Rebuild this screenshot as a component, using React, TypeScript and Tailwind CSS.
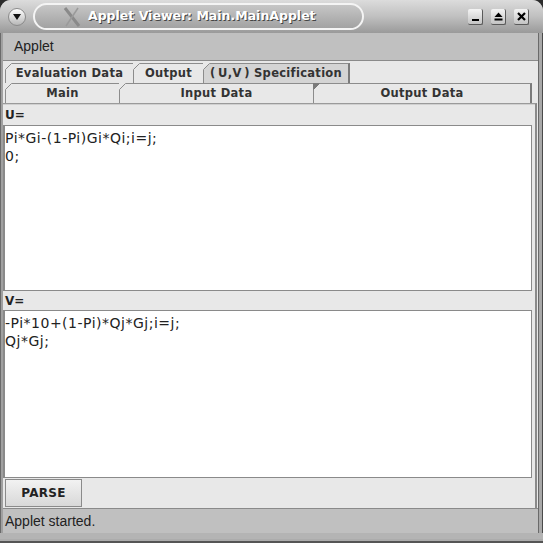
import React from "react";

const ui = { fontFamily: '"DejaVu Sans", "Liberation Sans", sans-serif' };
const plain = { fontFamily: '"Liberation Sans", Arial, sans-serif' };

function Corner({ fill, line }: { fill: string; line: string }) {
  // notched top-left corner of a tab
  return (
    <svg className="absolute -left-px -top-px" width="7" height="7" viewBox="0 0 7 7">
      <polygon points="0,0 7,0 0,7" fill={fill} />
      <line x1="0.5" y1="6.5" x2="6.5" y2="0.5" stroke={line} strokeWidth="1" />
    </svg>
  );
}

function Tab({
  label,
  width,
  bg = "bg-[#e8e8e8]",
  dark = false,
  last = false,
}: {
  label: string;
  width: string;
  bg?: string;
  dark?: boolean;
  last?: boolean;
}) {
  return (
    <div
      className={`relative ${width} h-full ${bg} border-l border-t border-[#8c8c8c] ${
        last ? "border-r-2 border-r-[#7a7a7a]" : ""
      } flex items-center justify-center text-[11.5px] font-bold text-[#333] tracking-[0.3px]`}
      style={ui}
    >
      {dark ? <Corner fill="#7a7a7a" line="#7a7a7a" /> : <Corner fill="#e8e8e8" line="#8c8c8c" />}
      {label}
    </div>
  );
}

function WinButton({ children }: { children: React.ReactNode }) {
  return (
    <div className="w-[15px] h-[16px] rounded-[2px] bg-gradient-to-b from-[#f4f4f4] to-[#c4c4c4] border-r border-b border-[#5a5a5a] flex items-center justify-center">
      {children}
    </div>
  );
}

function Field({ lines, height }: { lines: string[]; height: string }) {
  return (
    <div
      className={`${height} mr-[3px] bg-white border border-[#8a8a8a] border-l-2 pl-0 pt-[3px] text-[14px] leading-[18px] text-[#222] tracking-[0.5px]`}
      style={ui}
    >
      {lines.map((l) => (
        <div key={l}>{l}</div>
      ))}
    </div>
  );
}

export default function App() {
  return (
    <div className="w-[543px] h-[543px] bg-[#2c2c2c] overflow-hidden">
      <div className="w-full h-full flex flex-col rounded-t-[11px] overflow-hidden bg-[#a4a4a4]">
        {/* Title bar */}
        <div className="h-[33px] shrink-0 bg-gradient-to-b from-[#dcdcdc] via-[#c0c0c0] to-[#9a9a9a] flex items-center px-[8px]">
          <div className="w-[18px] h-[18px] rounded-full bg-gradient-to-b from-[#ffffff] to-[#b8b8b8] border border-[#8a8a8a] flex items-center justify-center">
            <svg width="10" height="8" viewBox="0 0 10 8">
              <polygon points="1,1 9,1 5,7" fill="#111" />
            </svg>
          </div>
          <div className="ml-[7px] w-[331px] h-[27px] rounded-full border-2 border-[#f4f4f4] bg-gradient-to-b from-[#c6c6c6] to-[#a2a2a2] flex items-center pl-[27px]">
            <svg width="20" height="20" viewBox="0 0 20 20">
              <path d="M3 1 L17 19" stroke="#8a8a8a" strokeWidth="3" />
              <path d="M16 1 L4 19" stroke="#9a9a9a" strokeWidth="1.5" />
            </svg>
            <span
              className="ml-[6px] text-[12.5px] font-bold text-white [text-shadow:1px_1px_0_#444]"
              style={ui}
            >
              Applet Viewer: Main.MainApplet
            </span>
          </div>
          <div className="ml-auto flex gap-[8px] mr-[6px]">
            <WinButton>
              <div className="w-[7px] h-[2px] bg-black mt-[7px]" />
            </WinButton>
            <WinButton>
              <svg width="9" height="9" viewBox="0 0 9 9">
                <polygon points="4.5,0.5 8.5,5 0.5,5" fill="#000" />
                <rect x="0.5" y="6.5" width="8" height="2" fill="#000" />
              </svg>
            </WinButton>
            <WinButton>
              <svg width="9" height="9" viewBox="0 0 9 9">
                <path d="M1 1 L8 8 M8 1 L1 8" stroke="#000" strokeWidth="2.2" />
              </svg>
            </WinButton>
          </div>
        </div>

        {/* Body with side frames */}
        <div className="flex flex-1 min-h-0">
          <div className="w-[3px] bg-[#a0a0a0] border-l border-[#6a6a6a]" />
          <div className="flex-1 flex flex-col bg-[#e8e8e8]">
            {/* Menu bar */}
            <div className="h-[28px] shrink-0 bg-[#c0c0c0] border-b border-[#8a8a8a] flex items-center pl-[11px] text-[14px] text-[#222]" style={plain}>
              Applet
            </div>

            {/* Tabs */}
            <div className="pl-[2px] pr-[6px] pt-[2px]">
              <div className="flex h-[20px]">
                <Tab label="Evaluation Data" width="w-[128px]" />
                <Tab label="Output" width="w-[70px]" />
                <Tab label={"(\u2009U,V\u2009) Specification"} width="w-[147px]" bg="bg-[#d4d4d4]" last />
              </div>
              <div className="flex h-[20px]">
                <Tab label="Main" width="w-[114px]" />
                <Tab label="Input Data" width="w-[194px]" />
                <Tab label="Output Data" width="flex-1" dark last />
              </div>
            </div>

            {/* Content panel */}
            <div className="flex-1 flex flex-col border-t border-[#9a9a9a] border-r-2 border-r-[#8a8a8a] mr-px">
              <div className="h-[21px] border-t border-[#d0d0d0] pl-[2px] flex items-center text-[12px] font-bold text-[#222]" style={ui}>
                U=
              </div>
              <Field height="h-[166px]" lines={["Pi*Gi-(1-Pi)Gi*Qi;i=j;", "0;"]} />
              <div className="h-[19px] pl-[2px] flex items-center text-[12px] font-bold text-[#222]" style={ui}>
                V=
              </div>
              <Field height="h-[168px]" lines={["-Pi*10+(1-Pi)*Qj*Gj;i=j;", "Qj*Gj;"]} />
              <div className="flex-1 flex items-center pl-[2px]">
                <button
                  className="w-[77px] h-[28px] bg-gradient-to-b from-[#f2f2f2] to-[#d8d8d8] border border-[#8a8a8a] text-[12px] font-bold text-[#222] tracking-[0.3px]"
                  style={ui}
                >
                  PARSE
                </button>
              </div>
            </div>

            {/* Status bar */}
            <div className="h-[25px] shrink-0 bg-[#c0c0c0] border-t border-[#8a8a8a] flex items-center pl-[2px] pt-px text-[14px] text-[#222]" style={plain}>
              Applet started.
            </div>
          </div>
          <div className="w-[5px] bg-[#a8a8a8] border-l border-[#6a6a6a] border-r border-r-[#4a4a4a]" />
        </div>
        <div className="h-[10px] shrink-0 bg-[#acacac] border-t-[6px] border-[#b4b4b4] border-b-2 border-b-[#555]" />
      </div>
    </div>
  );
}
